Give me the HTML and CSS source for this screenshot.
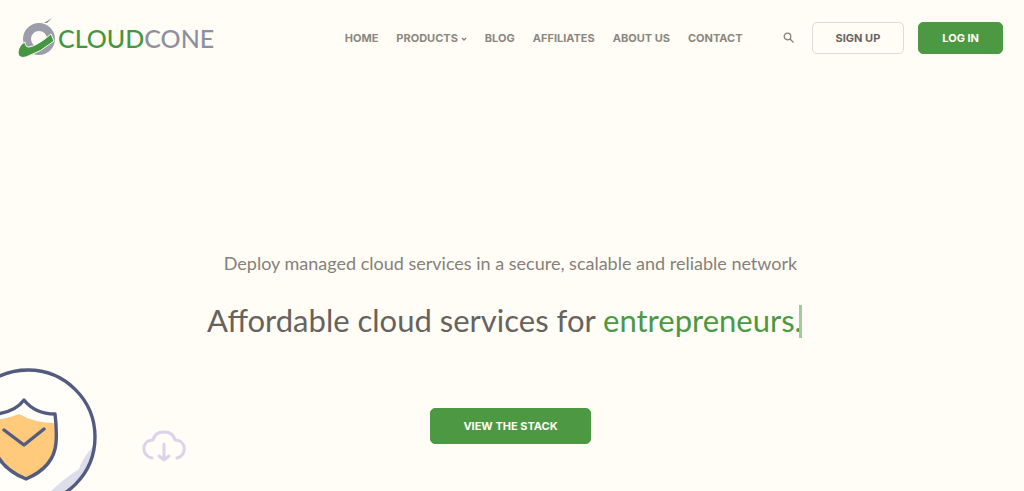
FILE: index.html
```
<!DOCTYPE html>
<html lang="en">
<head>
<meta charset="utf-8">
<meta name="viewport" content="width=device-width, initial-scale=1">
<title>CloudCone</title>
<link rel="stylesheet" href="styles.css">
</head>
<body>
<header class="header">
  <a class="logo" href="#" aria-label="CloudCone">
    <svg class="logo-mark" viewBox="0 0 40 42" aria-hidden="true">
      <circle cx="22" cy="22" r="12" fill="none" stroke="#9b9dab" stroke-width="8"/>
      <path d="M27 6 35 1 30 6Z" fill="#85878f"/>
      <path d="M1 35C2 30 4 27 8 25Q8 30 12 30Q20 29 34 17L37 24Q24 35 9 40Q1 42 1 35Z" fill="#449640" stroke="#fffdf6" stroke-width="1"/>
    </svg>
    <span class="logo-text"><span class="logo-green">CLOUD</span>CONE</span>
  </a>
  <nav class="nav" aria-label="Main">
    <a href="#">HOME</a>
    <a href="#">PRODUCTS<svg class="chevron" viewBox="0 0 6 4" aria-hidden="true"><path d="M1 1 3 3 5 1"/></svg></a>
    <a href="#">BLOG</a>
    <a href="#">AFFILIATES</a>
    <a href="#">ABOUT US</a>
    <a href="#">CONTACT</a>
  </nav>
  <button class="search" type="button" aria-label="Search">
    <svg viewBox="0 0 12 12" aria-hidden="true"><circle cx="4.5" cy="4.5" r="3.3"/><path d="M7 7 10.5 10.5"/></svg>
  </button>
  <div class="actions">
    <a class="button button-outline" href="#">SIGN UP</a>
    <a class="button button-solid" href="#">LOG IN</a>
  </div>
</header>
<main class="hero">
  <p class="lead">Deploy managed cloud services in a secure, scalable and reliable network</p>
  <h1 class="title">Affordable cloud services for <span class="typed">entrepreneurs.</span></h1>
  <a class="button button-solid button-large" href="#">VIEW THE STACK</a>
  <svg class="shield" viewBox="0 0 100 125" aria-hidden="true">
    <circle cx="28" cy="70" r="67" fill="#fffef9"/>
    <path d="M94 79Q82 93 79 103Q65 112 51 125H67Q91 108 94 79Z" fill="#dddeea"/>
    <circle cx="28" cy="71" r="67" fill="none" stroke="#535c80" stroke-width="3.4"/>
    <path d="M-4 54Q10 52 19 48Q34 57 55 57V82Q52 101 26 112Q4 104-4 88Z" fill="#ffca7c"/>
    <path d="M24 34Q35 48 55 48Q57 64 56 77Q54 101 26 113Q4 104-4 87V48Q15 46 24 34ZM4 64 24 79 44 63" fill="none" stroke="#535c80" stroke-width="3.4" stroke-linecap="round" stroke-linejoin="round"/>
  </svg>
  <svg class="cloud" viewBox="0 0 44 34" aria-hidden="true">
    <path d="M10 29C-1 27-1 11 11 11Q13 3 22 3T33 11C45 11 45 27 35 29M22 15V31M17 27 22 31 27 27"/>
  </svg>
</main>
</body>
</html>
```

FILE: styles.css
```
* {
  box-sizing: border-box;
}

body {
  margin: 0;
  min-height: 100vh;
  display: flex;
  flex-direction: column;
  background: #fffdf6;
  color: #66635f;
  font-family: Lato, sans-serif;
}

a {
  color: inherit;
  text-decoration: none;
}

.header {
  display: flex;
  align-items: center;
  padding: 17px 21px 17px 17px;
}

.logo {
  display: flex;
  align-items: center;
  gap: 1px;
}

.logo-mark {
  width: 40px;
  height: 42px;
}

.logo-text {
  color: #8e909d;
  font-size: 25px;
  font-weight: 500;
  line-height: 40px;
}

.logo-green {
  color: #449640;
}

.nav {
  display: flex;
  gap: 18px;
  margin-left: auto;
  color: #8b877f;
  font-family: Inter, sans-serif;
  font-size: 11px;
  font-weight: 700;
  line-height: 16px;
  white-space: nowrap;
}

.chevron {
  width: 6px;
  height: 4px;
  margin-left: 3px;
  vertical-align: middle;
}

.chevron path,
.search svg {
  fill: none;
  stroke: #85817a;
  stroke-width: 1.3;
}

.search {
  display: flex;
  margin: 0 17px 0 40px;
  padding: 0;
  border: 0;
  background: none;
}

.search svg {
  width: 12px;
  height: 12px;
}

.actions {
  display: flex;
  gap: 14px;
}

.button {
  display: inline-block;
  padding: 7px 23px;
  border: 1px solid #dedad5;
  border-radius: 5px;
  font-family: Inter, sans-serif;
  font-size: 11px;
  font-weight: 700;
  line-height: 16px;
  text-align: center;
  white-space: nowrap;
}

.button-solid {
  border-color: #4d9843;
  background: #4d9843;
  color: #fffdf6;
}

.button-large {
  padding: 9px 32px;
}

.hero {
  position: relative;
  flex: 1;
  overflow: hidden;
  padding: 175px 3px 47px 0;
  text-align: center;
}

.lead {
  margin: 0 0 25px;
  color: #85817a;
  font-size: 18px;
  line-height: 24px;
}

.title {
  margin: 0 0 68px;
  padding-right: 12px;
  font-size: 31px;
  font-weight: 400;
  line-height: 40px;
}

.typed {
  position: relative;
  color: #4d9843;
}

.typed::after {
  content: "";
  position: absolute;
  top: 4px;
  right: 0;
  width: 3px;
  height: 33px;
  background: #a4c99b;
}

.shield {
  position: absolute;
  left: 0;
  bottom: 0;
  width: 100px;
  height: 125px;
}

.cloud {
  position: absolute;
  left: 142px;
  bottom: 28px;
  width: 44px;
  height: 34px;
  fill: none;
  stroke: #d9d4ea;
  stroke-width: 3;
  stroke-linecap: round;
  stroke-linejoin: round;
}
```
